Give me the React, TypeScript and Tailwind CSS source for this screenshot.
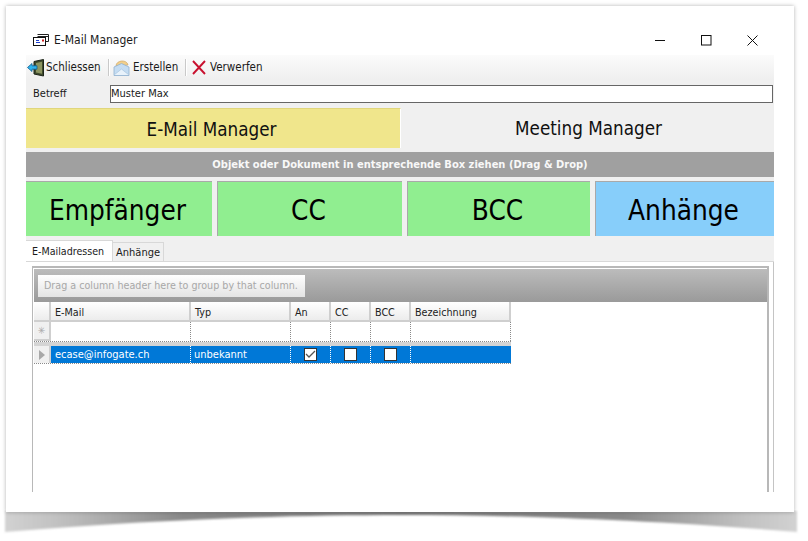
const font = "font-['DejaVu_Sans',sans-serif] [font-stretch:condensed]";

const DoorIcon = () => (
  <svg width="18" height="18" viewBox="0 0 18 18" className="shrink-0">
    <path d="M7 2.5 L16.5 0.5 V17 L7 15 Z" fill="#3f4a2c" stroke="#1d2418" strokeWidth="1" />
    <path d="M9 4 L15 2.8 V14.8 L9 13.6 Z" fill="#8b9460" />
    <path d="M0.5 8.5 L5 4.5 V6.8 H10 V10.2 H5 V12.5 Z" fill="#2fb4ee" stroke="#0f5a8c" strokeWidth="0.8" />
  </svg>
);

const EnvelopeIcon = () => (
  <svg width="17" height="18" viewBox="0 0 17 18" className="shrink-0">
    <path d="M3 7 C3 1 14 0 15 6 Z" fill="#f2cf8a" stroke="#cfa96c" strokeWidth="0.7" />
    <path d="M1 8 L8.5 4.5 L16 8 V16.5 H1 Z" fill="#c4dcf2" stroke="#8fb0cf" strokeWidth="0.8" />
    <path d="M1 16 L8.5 10 L16 16" fill="#e8f2fb" stroke="#a8c4de" strokeWidth="0.7" />
  </svg>
);

const CrossIcon = () => (
  <svg width="14" height="15" viewBox="0 0 14 15" className="shrink-0">
    <path d="M1 1 L13 14 M13 1 L1 14" stroke="#c8102e" strokeWidth="1.9" />
  </svg>
);

const FormIcon = () => (
  <svg width="16" height="12" viewBox="0 0 16 12" className="shrink-0">
    <path d="M4.5 0.5 H15.5 V7.5 H13" fill="none" stroke="#222" />
    <path d="M4.5 2.5 H15.5" stroke="#222" />
    <rect x="0.5" y="3.5" width="12" height="8" fill="#fff" stroke="#111" />
    <path d="M3 6.5 H6 M3 8.5 H7" stroke="#1e3fd0" />
    <rect x="9" y="5.5" width="2" height="2" fill="#d01e1e" />
  </svg>
);

const Separator = () => <div className="w-[2px] h-[17px] bg-[#c9c9c9] border-r border-white" />;

const Box = ({ label, width, color }: { label: string; width: string; color: string }) => (
  <div
    className={`${width} ${color} h-[55px] flex items-center justify-center pt-[4px] pr-[3px] border-t border-l border-[#a9a9a9] text-[27.7px] text-black`}
  >
    {label}
  </div>
);

const HeaderCell = ({ label, width }: { label: string; width: string }) => (
  <div
    className={`${width} h-[20px] shrink-0 flex items-center pl-1 pt-[5px] text-[10.7px] text-[#222] bg-gradient-to-b from-white to-[#ececec] border-r-2 border-b-2 border-[#cfcfcf]`}
  >
    {label}
  </div>
);

const NewRowCell = ({ width }: { width: string }) => (
  <div className={`${width} h-full shrink-0 border-r border-dotted border-[#8a8a8a]`} />
);

const CheckBox = ({ checked }: { checked?: boolean }) => (
  <div className="w-[13px] h-[13px] bg-white border border-[#333] flex items-center justify-center">
    {checked && (
      <svg width="11" height="9" viewBox="0 0 11 9">
        <path d="M1 4 L4 7 L10 1" fill="none" stroke="#555" strokeWidth="1.3" />
      </svg>
    )}
  </div>
);

const CheckCell = ({ width, checked }: { width: string; checked?: boolean }) => (
  <div className={`${width} h-full shrink-0 flex items-center justify-center border-r border-dotted border-white`}>
    <CheckBox checked={checked} />
  </div>
);

export default function App() {
  return (
    <div className={`${font} relative w-[808px] h-[541px] overflow-hidden bg-white pt-[6px] pl-[6px]`}>
      {/* curved drop shadow under the window */}
      <svg width="808" height="29" viewBox="0 0 808 29" className="absolute left-0 top-[510px]">
        <defs>
          <linearGradient id="shade" x1="0" y1="0" x2="1" y2="0">
            <stop offset="0" stopColor="#d2d2d2" />
            <stop offset="0.07" stopColor="#c0c0c0" />
            <stop offset="0.22" stopColor="#8a8a8a" />
            <stop offset="0.5" stopColor="#767676" />
            <stop offset="0.78" stopColor="#8a8a8a" />
            <stop offset="0.93" stopColor="#c0c0c0" />
            <stop offset="1" stopColor="#d2d2d2" />
          </linearGradient>
          <filter id="soft">
            <feGaussianBlur stdDeviation="1" />
          </filter>
        </defs>
        <path d="M5 1 H797 V22 C640 9 510 5 401 5 C292 5 162 9 5 22 Z" fill="url(#shade)" filter="url(#soft)" />
      </svg>

      <div className="relative w-[788px] h-[506px] bg-white shadow-[0_0_4px_rgba(0,0,0,0.3)] pl-[20px] pt-[25px]">
        <div className="w-[748px] h-[24px] flex items-center pb-[6px] text-[12px] text-[#1a1a1a]">
          <div className="ml-[7px] mr-[5px]">
            <FormIcon />
          </div>
          <span>E-Mail Manager</span>
          <div className="ml-auto flex items-center">
            <svg width="11" height="11" viewBox="0 0 11 11" className="mr-[35px]">
              <path d="M0 5.5 H10" stroke="#111" />
            </svg>
            <svg width="11" height="11" viewBox="0 0 11 11" className="mr-[35px]">
              <rect x="0.5" y="0.5" width="9.5" height="9.5" fill="none" stroke="#111" />
            </svg>
            <svg width="11" height="11" viewBox="0 0 11 11" className="mr-[16px]">
              <path d="M0.5 0.5 L10.5 10.5 M10.5 0.5 L0.5 10.5" stroke="#111" />
            </svg>
          </div>
        </div>

        <div className="w-[748px] bg-[#f0f0f0]">
          <div className="h-[25px] flex items-center pl-[1px] text-[11.5px] text-[#1a1a1a] bg-gradient-to-b from-[#fbfbfb] to-[#efefef]">
            <DoorIcon />
            <span className="ml-[1px] pt-[1px] w-[62px]">Schliessen</span>
            <Separator />
            <div className="ml-[3px]">
              <EnvelopeIcon />
            </div>
            <span className="ml-[3px] pt-[1px] w-[52px]">Erstellen</span>
            <Separator />
            <div className="ml-[5px]">
              <CrossIcon />
            </div>
            <span className="ml-[4px] pt-[1px]">Verwerfen</span>
          </div>

          <div className="h-[28px] flex items-center pl-[7px] pr-[1px] pb-[1px] text-[11px] text-[#1a1a1a]">
            <span className="w-[77px] pt-[2px]">Betreff</span>
            <div className="flex-1 h-[18px] bg-white border border-[#666] flex items-center pt-[1px]">Muster Max</div>
          </div>

          <div className="h-[40px] flex">
            <div className="w-[375px] bg-[#f0e68c] border-t border-[#e0d67c] border-r border-r-white flex items-center justify-center pt-[3px] pr-[3px] text-[18.7px] text-[#111]">
              E-Mail Manager
            </div>
            <div className="flex-1 flex items-center justify-center pt-[3px] pl-[2px] text-[18.7px] text-[#111]">
              Meeting Manager
            </div>
          </div>

          <div className="mt-[4px] h-[25px] bg-[#a0a0a0] flex items-center justify-center pt-[2px] text-[11.05px] font-bold text-[#f8f8f8]">
            Objekt oder Dokument in entsprechende Box ziehen (Drag &amp; Drop)
          </div>

          <div className="mt-[4px] flex gap-[5px]">
            <div className="w-[186px] h-[55px] bg-[#90ee90] flex items-center justify-center pt-[4px] pr-[3px] border-t border-[#a9a9a9] text-[27.7px] text-black">
              Empfänger
            </div>
            <Box label="CC" width="w-[185px]" color="bg-[#90ee90]" />
            <Box label="BCC" width="w-[183px]" color="bg-[#90ee90]" />
            <Box label="Anhänge" width="w-[179px]" color="bg-[#87cefa]" />
          </div>

          <div className="h-[26px] flex items-end border-b border-[#d8d8d8]">
            <div className="h-[21px] w-[87px] bg-white border-t border-r border-[#d8d8d8] flex items-center pl-[6px] pt-[2px] text-[10.6px] text-[#1a1a1a]">
              E-Mailadressen
            </div>
            <div className="h-[19px] w-[51px] bg-[#f0f0f0] border-t border-r border-[#d8d8d8] flex items-center pl-[3px] pt-[3px] text-[11px] text-[#1a1a1a]">
              Anhänge
            </div>
          </div>

          <div className="h-[230px] bg-white border-r border-[#c4c4c4] pt-[4px] pl-[6px] pr-[4px]">
            <div className="h-[226px] border-l border-r-2 border-t-2 border-[#b8b8b8] pt-[1px] pl-[1px]">
              <div className="h-[33px] bg-gradient-to-b from-[#bcbcbc] to-[#9a9a9a] flex items-center pl-[4px]">
                <div className="w-[267px] h-[22px] bg-gradient-to-b from-white to-[#e4e4e4] flex items-center pl-[6px] pt-[1px] text-[10.65px] whitespace-nowrap text-[#a8a8a8]">
                  Drag a column header here to group by that column.
                </div>
              </div>
              <div className="flex">
                <HeaderCell label="" width="w-[17px]" />
                <HeaderCell label="E-Mail" width="w-[140px]" />
                <HeaderCell label="Typ" width="w-[100px]" />
                <HeaderCell label="An" width="w-[40px]" />
                <HeaderCell label="CC" width="w-[40px]" />
                <HeaderCell label="BCC" width="w-[40px]" />
                <HeaderCell label="Bezeichnung" width="w-[100px]" />
              </div>
              <div className="flex h-[20px] border-b border-dotted border-[#8a8a8a] w-[477px]">
                <div className="w-[17px] h-full shrink-0 bg-[#f0f0f0] border-r-2 border-b-2 border-[#cfcfcf] flex items-center justify-center text-[10px] text-[#aaa]">
                  ✳
                </div>
                <NewRowCell width="w-[140px]" />
                <NewRowCell width="w-[100px]" />
                <NewRowCell width="w-[40px]" />
                <NewRowCell width="w-[40px]" />
                <NewRowCell width="w-[40px]" />
                <NewRowCell width="w-[100px]" />
              </div>
              <div className="h-[4px] w-[477px] bg-[#d4d4d4]" />
              <div className="flex h-[18px] w-[477px] border-b border-dotted border-[#8a8a8a]">
                <div className="w-[17px] h-full shrink-0 bg-[#f0f0f0] border-r-2 border-[#cfcfcf] flex items-center justify-center">
                  <svg width="6" height="10" viewBox="0 0 6 10">
                    <path d="M0 0 L6 5 L0 10 Z" fill="#a8a8a8" />
                  </svg>
                </div>
                <div className="flex-1 flex bg-[#0078d7] text-[11px] text-white">
                  <div className="w-[140px] flex items-center pl-[4px] pt-[2px] border-r border-dotted border-white">
                    ecase@infogate.ch
                  </div>
                  <div className="w-[100px] flex items-center pl-[3px] pt-[2px] border-r border-dotted border-white">
                    unbekannt
                  </div>
                  <CheckCell width="w-[40px]" checked />
                  <CheckCell width="w-[40px]" />
                  <CheckCell width="w-[40px]" />
                </div>
              </div>
            </div>
          </div>
        </div>
      </div>
    </div>
  );
}
